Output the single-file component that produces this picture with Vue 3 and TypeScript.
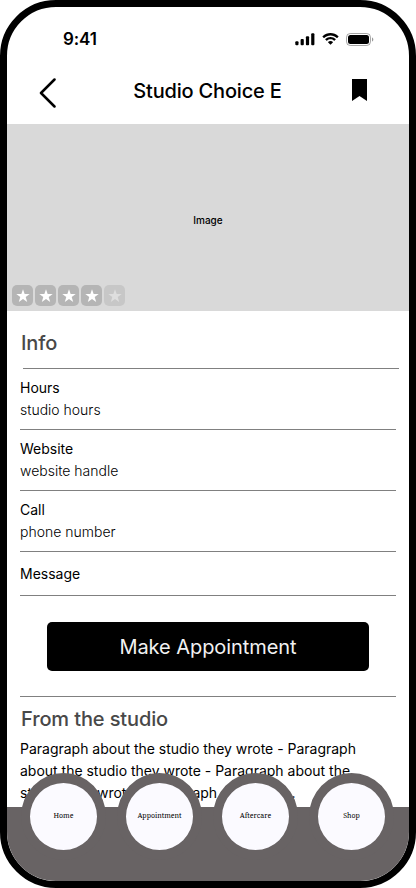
<script setup lang="ts">
import { ref } from 'vue';

interface InfoRow {
  label: string;
  value?: string;
}

const title = 'Studio Choice E';
const rating = ref(4);

const rows: InfoRow[] = [
  { label: 'Hours', value: 'studio hours' },
  { label: 'Website', value: 'website handle' },
  { label: 'Call', value: 'phone number' },
  { label: 'Message' },
];

const tabs = ['Home', 'Appointment', 'Aftercare', 'Shop'];
</script>

<template>
  <div class="phone">
    <div class="status-bar">
      <span class="time">9:41</span>
      <div class="status-icons">
        <svg class="signal" width="20" height="13" viewBox="0 0 20 13">
          <rect x="0.3" y="8.2" width="3.2" height="4" rx="1" />
          <rect x="5.6" y="5.9" width="3.2" height="6.3" rx="1" />
          <rect x="10.9" y="3.3" width="3.2" height="8.9" rx="1" />
          <rect x="16.2" y="0.3" width="3.2" height="11.9" rx="1" />
        </svg>
        <svg class="wifi" width="17" height="12" viewBox="0 0 17 12">
          <path d="M8.5 2.4c2.4 0 4.6.9 6.3 2.5.1.1.3.1.4 0l1.2-1.2c.2-.2.2-.4 0-.5C12-1 5-1 .6 3.2c-.2.1-.2.3 0 .5l1.2 1.2c.1.1.3.1.4 0 1.7-1.6 3.9-2.5 6.3-2.5z" />
          <path d="M8.5 6.3c1.3 0 2.5.5 3.5 1.4.1.1.3.1.4 0l1.3-1.2c.1-.2.1-.4 0-.5-2.9-2.7-7.4-2.7-10.400 0-.1.1-.1.3 0 .5l1.3 1.2c.1.1.3.1.4 0 1-.9 2.200-1.400 3.500-1.400z" />
          <path d="M11 8.9c.1.1.1.3 0 .4l-2.200 2.200c-.2.2-.4.2-.6 0L6 9.300c-.1-.1-.1-.3 0-.4 1.400-1.200 3.600-1.200 5 0z" />
        </svg>
        <svg class="battery" width="28" height="13" viewBox="0 0 28 13">
          <rect x="0.5" y="0.5" width="24" height="12" rx="3.8" fill="none" stroke="#000" stroke-opacity="0.35" />
          <rect x="2" y="2" width="21" height="9" rx="2.5" />
          <path d="M26 4.5v4c.8-.3 1.300-1.100 1.300-2s-.5-1.700-1.300-2z" fill-opacity="0.4" />
        </svg>
      </div>
    </div>

    <header class="header">
      <svg class="back" width="18" height="30" viewBox="0 0 18 30">
        <path d="M15.500 1.500L2 15l13.500 13.500" fill="none" stroke="#000" stroke-width="2.500" stroke-linecap="round" stroke-linejoin="round" />
      </svg>
      <h1>{{ title }}</h1>
      <svg class="bookmark" width="15" height="22" viewBox="0 0 15 22">
        <path d="M0 0h15v22l-7.500-5L0 22z" />
      </svg>
    </header>

    <div class="image">
      <span>Image</span>
      <div class="stars">
        <div v-for="n in 5" :key="n" class="star" :class="{ empty: n > rating }">
          <svg width="14" height="14" viewBox="0 0 14 14">
            <path d="M7 0.2l1.650 4.800h5.050L9.700 8.100l1.500 5L7 10.100l-4.200 3L4.300 8.100.3 5h5.050z" />
          </svg>
        </div>
      </div>
    </div>

    <main class="content">
      <h2 class="info-title">Info</h2>
      <div v-for="row in rows" :key="row.label" class="row" :class="{ single: !row.value }">
        <p>{{ row.label }}</p>
        <p v-if="row.value" class="value">{{ row.value }}</p>
      </div>

      <button class="cta">Make Appointment</button>

      <section class="about">
        <h2>From the studio</h2>
        <p>Paragraph about the studio they wrote - Paragraph about the studio they wrote - Paragraph about the studio they wrote - Paragraph about the ..</p>
      </section>
    </main>

    <nav class="tab-bar">
      <div v-for="tab in tabs" :key="tab" class="tab">
        <span>{{ tab }}</span>
      </div>
    </nav>
  </div>
</template>

<style>
body {
  margin: 0;
  background: #fff;
}
</style>

<style scoped>
.phone {
  position: relative;
  box-sizing: border-box;
  width: 416px;
  height: 888px;
  border: 7px solid #000;
  border-radius: 56px;
  background: #fff;
  overflow: hidden;
  font-family: Inter, 'Liberation Sans', sans-serif;
  color: #000;
}

h1,
h2,
p {
  margin: 0;
}

.status-bar {
  display: flex;
  justify-content: space-between;
  align-items: center;
  height: 64px;
  padding: 0 35px 0 56px;
}

.time {
  font-size: 17px;
  font-weight: 600;
  letter-spacing: -0.1px;
}

.status-icons {
  display: flex;
  align-items: center;
  gap: 7px;
}

.header {
  display: flex;
  justify-content: space-between;
  align-items: center;
  height: 53px;
  padding: 0 42px 0 32px;
}

.header h1 {
  font-size: 20px;
  font-weight: 500;
  line-height: 26px;
  letter-spacing: -0.18px;
  margin: 0 0 13px 6px;
}

.back {
  margin-bottom: 9px;
}

.bookmark {
  margin-bottom: 15px;
}

/* Placeholder foto studio */
.image {
  position: relative;
  display: flex;
  align-items: center;
  justify-content: center;
  height: 187px;
  background: #d9d9d9;
  font-size: 10px;
  font-weight: 500;
}

.image > span {
  margin-top: 5px;
}

.stars {
  position: absolute;
  left: 5px;
  bottom: 5px;
  display: flex;
  gap: 2px;
}

.star {
  display: flex;
  align-items: center;
  justify-content: center;
  width: 21px;
  height: 21px;
  border-radius: 5px;
  background: #b5b5b5;
}

.star svg {
  fill: #fff;
}

.star.empty {
  background: #c7c7c7;
}

.star.empty svg {
  fill: #dedede;
}

.content {
  padding: 0 13px;
}

h2 {
  font-size: 20px;
  font-weight: 500;
  line-height: 26px;
  letter-spacing: -0.12px;
  color: #484848;
}

.info-title {
  height: 38px;
  margin: 0 -3px 0 3px;
  padding-top: 19px;
  border-bottom: 1px solid #808080;
  text-indent: -2px;
}

.row {
  box-sizing: border-box;
  height: 61px;
  padding-top: 8px;
  border-bottom: 1px solid #808080;
  width: 376px;
  font-size: 14px;
  line-height: 22px;
}

.row.single {
  height: 44px;
  padding-top: 11px;
}

.value {
  font-weight: 300;
}

.cta {
  display: block;
  width: 322px;
  height: 49px;
  margin: 26px 0 25px 27px;
  padding: 0;
  border: none;
  border-radius: 5px;
  background: #000;
  color: #f2f2f2;
  font-family: inherit;
  font-size: 20px;
  letter-spacing: -0.06px;
}

.about {
  width: 376px;
  border-top: 1px solid #808080;
  padding-top: 9px;
}

.about h2 {
  padding-left: 1px;
}

.about p {
  width: 350px;
  margin-top: 6px;
  font-size: 14px;
  line-height: 22px;
  letter-spacing: -0.01px;
}

.tab-bar {
  position: absolute;
  left: 0;
  right: 0;
  bottom: 0;
  display: flex;
  gap: 11px;
  height: 74px;
  padding-left: 14px;
  background: #686364;
}

.tab {
  display: flex;
  align-items: center;
  justify-content: center;
  flex: none;
  box-sizing: border-box;
  width: 85px;
  height: 87px;
  margin-top: -34px;
  border: 9px solid #686364;
  border-top-width: 10px;
  border-bottom-width: 10px;
  border-radius: 50%;
  background: #fbfaff;
  font-family: 'Noto Serif', 'Liberation Serif', serif;
  font-size: 7px;
}

.tab span {
  margin-bottom: 2px;
}
</style>
